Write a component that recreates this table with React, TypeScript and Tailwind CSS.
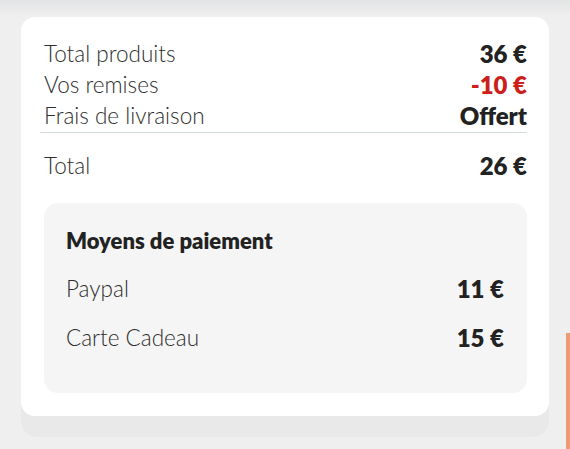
import React from "react";

const font = { fontFamily: "Lato, 'Open Sans', sans-serif" };

function Row({ label, value, red }: { label: string; value: string; red?: boolean }) {
  return (
    <div className="flex items-center justify-between h-[31px]">
      <span className="text-[22.5px] font-light text-[#2e2e2e]">{label}</span>
      <span className={`text-[24px] font-extrabold ${red ? "text-[#cc1e1a]" : "text-[#222]"}`}>{value}</span>
    </div>
  );
}

export default function App() {
  return (
    <div className="w-[570px] h-[449px] overflow-hidden bg-[#efefef] relative" style={font}>
      <div className="absolute top-0 left-0 right-0 h-[16px] bg-gradient-to-b from-[#e3e4e5] to-[#efefef]" />
      <div className="absolute right-0 top-[333px] w-[4px] h-[116px] bg-[#ee9a72]" />
      <div className="relative pt-[17px] pl-[21px] w-[549px]">
        <div className="rounded-[16px] bg-[#e9e9e9] pb-[21px]">
          <div className="rounded-[14px] bg-white pt-[21px] pl-[23px] pr-[22px] pb-[23px]">
            <Row label="Total produits" value="36 €" />
            <Row label="Vos remises" value="-10 €" red />
            <Row label="Frais de livraison" value="Offert" />
            <div className="h-px bg-[#d6dde0] mt-[1px] -ml-[4px]" />
            <div className="mt-[17px]">
              <Row label="Total" value="26 €" />
            </div>
            <div className="mt-[22px] rounded-[14px] bg-[#f5f5f5] pl-[22px] pr-[23px] pt-[23px] pb-[40px]">
              <div className="text-[22px] font-extrabold text-[#222] h-[28px] flex items-center">Moyens de paiement</div>
              <div className="mt-[19px] flex flex-col gap-[18px]">
                <Row label="Paypal" value="11 €" />
                <Row label="Carte Cadeau" value="15 €" />
              </div>
            </div>
          </div>
        </div>
      </div>
    </div>
  );
}
